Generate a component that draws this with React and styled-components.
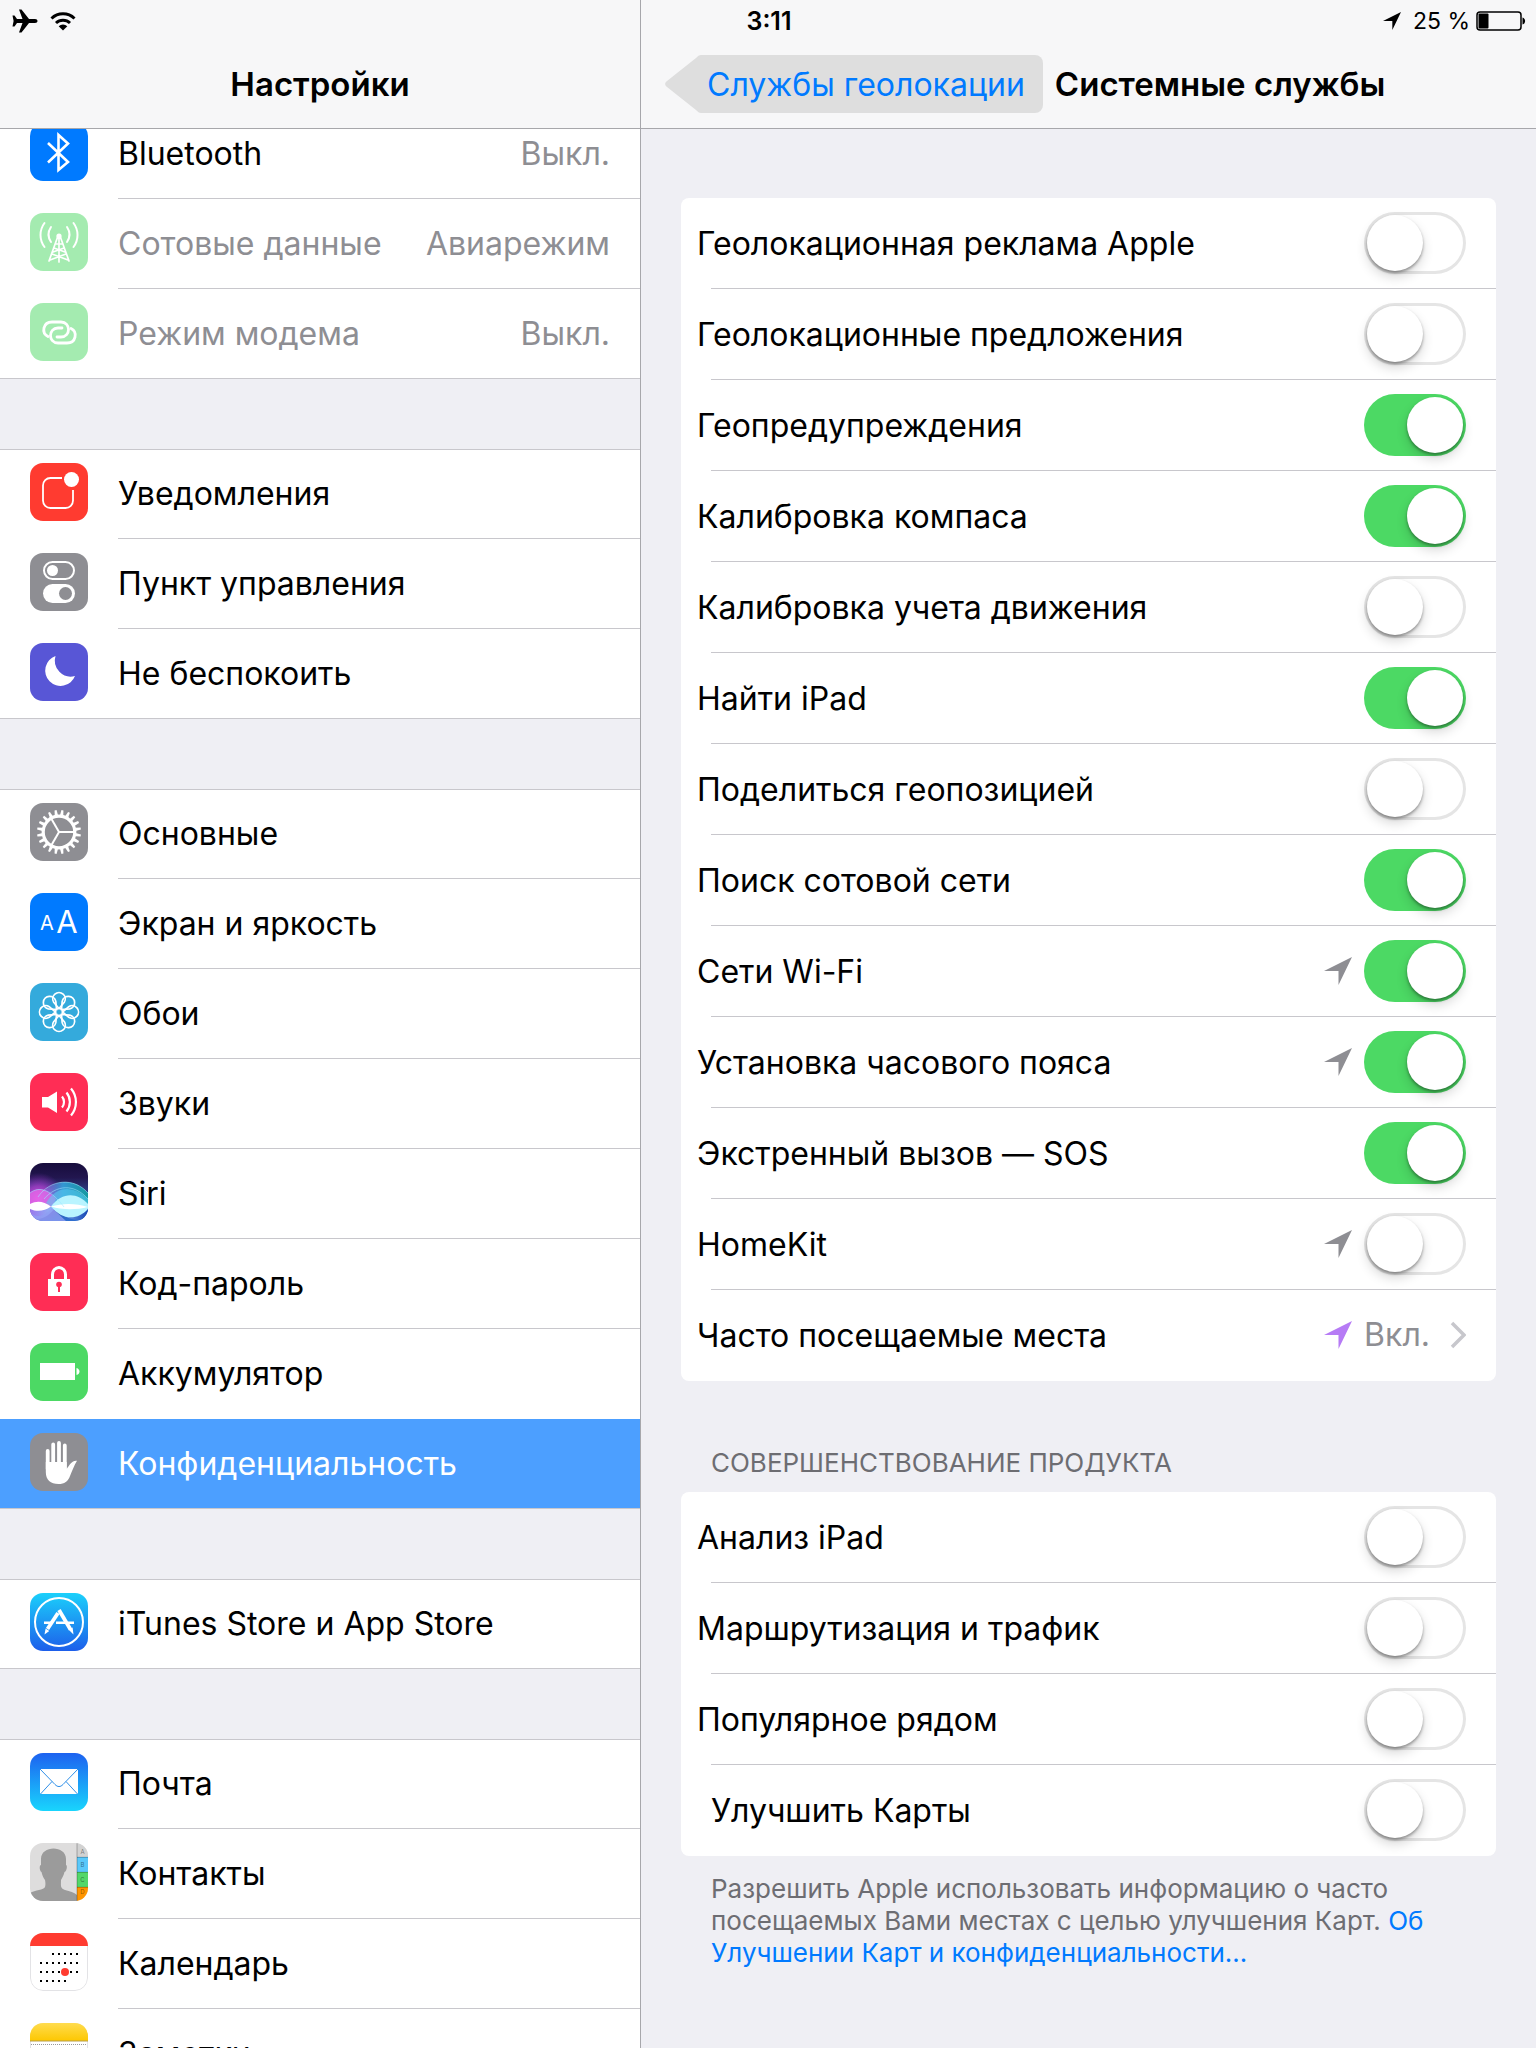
import React, { useState } from "react";
import styled, { createGlobalStyle } from "styled-components";

const color = {
  page: "#efeff4",
  bar: "#f7f7f8",
  barLine: "#a7a7ab",
  line: "#c8c7cc",
  text: "#000",
  muted: "#8e8e93",
  note: "#6d6d72",
  blue: "#007aff",
  green: "#4cd964",
};

const GlobalStyle = createGlobalStyle`
  *, *::before, *::after { box-sizing: border-box; }
  body {
    margin: 0;
    background: ${color.page};
    color: ${color.text};
    font-family: Inter, "Liberation Sans", sans-serif;
    font-size: 32px;
    line-height: 40px;
  }
`;

/* ---------- Layout ---------- */

const Screen = styled.div`
  position: relative;
  display: grid;
  grid-template-columns: 5fr 7fr;
  height: 100vh;
  overflow: hidden;
`;

const StatusBar = styled.div`
  position: absolute;
  z-index: 3;
  inset: 0 0 auto 0;
  height: 41px;
  padding: 0 10px 0 12px;
  display: grid;
  grid-template-columns: 1fr auto 1fr;
  align-items: center;
  font-size: 23px;
  line-height: 32px;
`;

const StatusGroup = styled.div`
  display: flex;
  align-items: center;
  justify-content: ${(p) => (p.$end ? "flex-end" : "flex-start")};
  gap: 12px;
`;

const Charge = styled.span`
  display: flex;
  align-items: center;
  gap: 6px;
`;

const Clock = styled.time`
  font-size: 25px;
  font-weight: 600;
`;

const Pane = styled.div`
  display: flex;
  flex-direction: column;
  min-width: 0;
  min-height: 0;
  border-left: ${(p) => (p.$divided ? `1px solid ${color.barLine}` : "none")};
`;

const NavBar = styled.header`
  position: relative;
  z-index: 2;
  flex: none;
  display: flex;
  align-items: center;
  justify-content: ${(p) => (p.$centered ? "center" : "flex-start")};
  gap: 12px;
  height: 129px;
  padding: 40px 24px 0;
  background: ${color.bar};
  border-bottom: 1px solid ${color.barLine};
`;

const Title = styled.h1`
  margin: 0;
  font-size: 33px;
  line-height: 42px;
  font-weight: 600;
  white-space: nowrap;
`;

const BackButton = styled.button`
  display: flex;
  padding: 0;
  border: 0;
  background: none;
  color: ${color.blue};
  font: inherit;
  white-space: nowrap;
  cursor: pointer;
`;

const BackTip = styled.svg`
  display: block;
  width: 36px;
  height: 58px;
  fill: #dedede;
`;

const BackLabel = styled.span`
  height: 58px;
  padding: 0 18px 0 6px;
  border-radius: 0 8px 8px 0;
  background: #dedede;
  line-height: 60px;
`;

const Scroll = styled.div`
  flex: 1;
  min-height: 0;
  overflow-y: auto;
  scrollbar-width: none;
`;

/* ---------- Sidebar ---------- */

const MenuNav = styled.nav`
  display: flex;
  flex-direction: column;
  gap: 70px;
  margin-top: -20px;
`;

const MenuGroup = styled.ul`
  margin: 0;
  padding: 0;
  list-style: none;
  background: #fff;
  box-shadow: inset 0 1px ${color.line};
`;

const MenuLink = styled.a`
  display: flex;
  align-items: stretch;
  gap: 30px;
  height: 90px;
  padding-left: 30px;
  border-bottom: 1px solid ${(p) => (p.$last ? color.line : "transparent")};
  background: ${(p) => (p.$selected ? "#4c9fff" : "transparent")};
  color: ${(p) => (p.$selected ? "#fff" : p.$dimmed ? color.muted : color.text)};
  text-decoration: none;
`;

const MenuIcon = styled.svg`
  flex: none;
  width: 58px;
  height: 58px;
  margin-top: 14px;
  border-radius: 13px;
  opacity: ${(p) => (p.$dimmed ? 0.5 : 1)};
`;

const MenuBody = styled.span`
  flex: 1;
  min-width: 0;
  display: flex;
  align-items: center;
  justify-content: space-between;
  margin-bottom: -1px;
  padding-right: 30px;
  border-bottom: 1px solid ${(p) => (p.$last ? "transparent" : color.line)};
  white-space: nowrap;
`;

const Value = styled.span`
  color: ${color.muted};
`;

/* ---------- Detail ---------- */

const Main = styled.main`
  padding: 69px 40px 40px;
`;

const Card = styled.ul`
  margin: 0;
  padding: 0;
  list-style: none;
  border-radius: 8px;
  background: #fff;
`;

const CardItem = styled.li`
  &::after {
    content: "";
    display: block;
    height: 1px;
    margin-left: 30px;
    background: ${color.line};
  }
  &:last-child::after {
    background: transparent;
  }
`;

const CardRow = styled.div`
  display: flex;
  align-items: center;
  gap: 12px;
  height: 90px;
  padding: 0 30px 0 ${(p) => (p.$inset ? 30 : 16)}px;
  color: inherit;
  text-decoration: none;
`;

const CardLabel = styled.label`
  flex: 1;
  min-width: 0;
  line-height: 42px;
  padding-top: 2px;
`;

const LinkValue = styled.span`
  display: flex;
  align-items: center;
  gap: 20px;
  color: ${color.muted};
`;

const Toggle = styled.input`
  appearance: none;
  flex: none;
  display: flex;
  width: 102px;
  height: 62px;
  margin: 0;
  padding: 3px;
  border-radius: 31px;
  background: #fff;
  box-shadow: inset 0 0 0 3px #e5e5e5;
  cursor: pointer;

  &::before {
    content: "";
    width: 56px;
    height: 56px;
    border-radius: 50%;
    background: #fff;
    box-shadow: 0 2px 3px rgba(0, 0, 0, 0.35), 0 6px 12px rgba(0, 0, 0, 0.16);
  }

  &:checked {
    justify-content: flex-end;
    background: ${color.green};
    box-shadow: none;
  }
`;

const SectionTitle = styled.h2`
  margin: 66px 30px 13px;
  color: ${color.note};
  font-size: 26px;
  line-height: 32px;
  font-weight: 400;
  text-transform: uppercase;
`;

const Note = styled.p`
  margin: 17px 30px 0;
  color: ${color.note};
  font-size: 26px;
  line-height: 32px;
`;

const NoteLink = styled.a`
  color: ${color.blue};
  text-decoration: none;
`;

/* ---------- Small drawings ---------- */

const LocationArrow = ({ fill = color.muted, size = 28 }) => (
  <svg width={size} height={size} viewBox="0 0 28 28" aria-hidden="true">
    <path d="M28 0 14.500 28V14H0Z" fill={fill} />
  </svg>
);

const Chevron = () => (
  <svg width="16" height="28" viewBox="0 0 16 28" fill="none" stroke="#c7c7cc" strokeWidth="3.500" aria-hidden="true">
    <path d="M2 2 14 14 2 26" />
  </svg>
);

const Airplane = () => (
  <svg width="26" height="24" viewBox="0 0 26 24" aria-hidden="true">
    <path d="M25.500 12c0 1.300-1 2-2.500 2h-6L9.500 23.500H7L10.500 14H5l-2.500 3.500H.5L1.600 12 .5 6.500h2L5 10h5.500L7 .5h2.500L17 10h6c1.500 0 2.500.7 2.500 2Z" />
  </svg>
);

const Wifi = () => (
  <svg width="26" height="20" viewBox="0 0 26 20" fill="none" stroke="#000" strokeWidth="3" aria-hidden="true">
    <path d="M1.500 7.500a16.500 16.500 0 0 1 23 0M6 12a10.200 10.200 0 0 1 14 0" />
    <path d="M13 19.500 8.700 15.200a6.200 6.200 0 0 1 8.600 0Z" fill="#000" stroke="none" />
  </svg>
);

const Battery = () => (
  <svg width="50" height="20" viewBox="0 0 50 20" aria-hidden="true">
    <rect x="1" y="1" width="44" height="18" rx="3" fill="none" stroke="#000" strokeWidth="1.500" />
    <rect x="2.500" y="2.500" width="10" height="15" rx="1" />
    <path d="M46.500 6.500c3.500 1 3.500 6 0 7Z" />
  </svg>
);

const around = (n) => Array.from({ length: n }, (_, i) => (i * 360) / n);

const glyphs = {
  bluetooth: (
    <>
      <rect width="58" height="58" fill="#007aff" />
      <path d="M18 20 38 39 28.500 47V12L38 20.500 18 39.500" fill="none" stroke="#fff" strokeWidth="2.600" />
    </>
  ),
  cellular: (
    <>
      <rect width="58" height="58" fill={color.green} />
      <g fill="none" stroke="#fff" strokeWidth="2" strokeLinecap="round">
        <path d="M14.500 10a20 20 0 0 0 0 24M43.500 10a20 20 0 0 1 0 24M21 14a13.500 13.500 0 0 0 0 15M37 14a13.500 13.500 0 0 1 0 15" />
        <path d="M28 23 19 48M30 23l9 25M29 22v27M24 35l11 4M34 35l-11 4M20 47l16-6M38 47l-16-6M25.500 31h7" strokeWidth="1.700" />
      </g>
      <circle cx="29" cy="23" r="2.600" fill="#fff" />
    </>
  ),
  hotspot: (
    <>
      <rect width="58" height="58" fill={color.green} />
      <g fill="none" stroke="#fff" strokeWidth="2.800" strokeLinecap="round">
        <path d="M18 33.500C11 30 13 19 22 19h9c10 0 10 15 0 15h-4" />
        <path d="M41 25.500C48 29 46 40 37 40h-9c-10 0-10-15 0-15h4" />
      </g>
    </>
  ),
  notifications: (
    <>
      <rect width="58" height="58" fill="#ff3b30" />
      <path d="M32 15H20.500a7.500 7.500 0 0 0-7.500 7.500v15a7.500 7.500 0 0 0 7.500 7.500h15a7.500 7.500 0 0 0 7.500-7.500V27" fill="none" stroke="#fff" strokeWidth="1.800" />
      <circle cx="41.500" cy="16.500" r="7.500" fill="#fff" />
    </>
  ),
  control: (
    <>
      <rect width="58" height="58" fill="#8e8e93" />
      <rect x="14" y="9" width="30" height="17" rx="8.500" fill="none" stroke="#fff" strokeWidth="2" />
      <circle cx="22.500" cy="17.500" r="5.500" fill="#fff" />
      <rect x="13" y="31" width="32" height="19" rx="9.500" fill="#fff" />
      <circle cx="35.500" cy="40.500" r="6.500" fill="#8e8e93" />
    </>
  ),
  moon: (
    <>
      <rect width="58" height="58" fill="#5856d6" />
      <path d="M25.500 13A15.400 15.400 0 1 0 45 33 16 16 0 0 1 25.500 13Z" fill="#fff" />
    </>
  ),
  gear: (
    <>
      <rect width="58" height="58" fill="#8e8e93" />
      <g fill="none" stroke="#fff">
        <circle cx="29" cy="29" r="15.800" strokeWidth="3.200" />
        {around(20).map((a) => (
          <path key={a} d="M-1.700-16.500-1-22H1L1.700-16.500Z" fill="#fff" stroke="none" transform={`translate(29 29) rotate(${a + 9})`} />
        ))}
        {around(3).map((a) => (
          <path key={a} d="M0 0H15" strokeWidth="2" transform={`translate(29 29) rotate(${a})`} />
        ))}
      </g>
    </>
  ),
  display: (
    <>
      <rect width="58" height="58" fill="#007aff" />
      <g fill="#fff" fontFamily="Inter, sans-serif" textAnchor="middle">
        <text x="17" y="37" fontSize="20">A</text>
        <text x="37" y="40" fontSize="31">A</text>
      </g>
    </>
  ),
  wallpaper: (
    <>
      <rect width="58" height="58" fill="#34aadc" />
      <g fill="none" stroke="#fff" strokeWidth="1.700">
        {around(8).map((a) => (
          <path key={a} d="M0-3.500-5.300-9.800A6.300 6.300 0 1 1 5.300-9.800Z" transform={`translate(29 29) rotate(${a})`} />
        ))}
        <circle cx="29" cy="29" r="3.600" />
      </g>
    </>
  ),
  sounds: (
    <>
      <rect width="58" height="58" fill="#ff2d55" />
      <path d="M12 24h6l9-5.500v21.500L18 34.500h-6Z" fill="#fff" />
      <path d="M32 23.500a8.500 8.500 0 0 1 0 11M36.500 19.500a15 15 0 0 1 0 19M41 15.500a21 21 0 0 1 0 27" fill="none" stroke="#fff" strokeWidth="2.200" />
    </>
  ),
  siri: (
    <>
      <defs>
        <linearGradient id="siri-sky" x1="0" y1="0" x2="0" y2="1">
          <stop offset="0" stopColor="#170d3c" />
          <stop offset="0.250" stopColor="#22164f" />
          <stop offset="0.500" stopColor="#2d3f86" />
          <stop offset="1" stopColor="#2f6fd0" />
        </linearGradient>
        <radialGradient id="siri-pink" cx="0.150" cy="0.620" r="0.450">
          <stop offset="0" stopColor="#f04be6" />
          <stop offset="0.500" stopColor="#b93fd6" stopOpacity="0.700" />
          <stop offset="1" stopColor="#8a35c8" stopOpacity="0" />
        </radialGradient>
        <linearGradient id="siri-teal" x1="0" y1="0" x2="1" y2="0">
          <stop offset="0" stopColor="#a06be8" stopOpacity="0.300" />
          <stop offset="0.500" stopColor="#35a9e4" />
          <stop offset="1" stopColor="#10a8a4" />
        </linearGradient>
        <linearGradient id="siri-low" x1="0" y1="0" x2="1" y2="0">
          <stop offset="0" stopColor="#9a78ec" />
          <stop offset="0.450" stopColor="#8dbcf8" />
          <stop offset="1" stopColor="#1546b4" />
        </linearGradient>
      </defs>
      <rect width="58" height="58" fill="url(#siri-sky)" />
      <rect width="58" height="58" fill="url(#siri-pink)" />
      <path d="M8 34C20 18 42 12 58 30V46H8Z" fill="url(#siri-teal)" opacity="0.850" />
      <path d="M0 30C8 23 18 26 26 36L22 44H0Z" fill="#e469e8" opacity="0.750" />
      <path d="M0 44H58V54C48 60 36 56 24 46 16 56 8 58 0 54Z" fill="url(#siri-low)" />
      <path d="M0 50C8 56 16 52 22 45L36 58H0Z" fill="#8f9df2" opacity="0.800" />
      <path d="M16 40C26 22 44 22 58 36V44H22Z" fill="#5ad0f4" opacity="0.550" />
      <path d="M0 41C8 37 14 39 21 43.500 14 48.500 7 49 0 46Z" fill="#fff" />
      <path d="M21 43.500C32 29 47 29 58 41V46C47 58 32 57 21 43.500Z" fill="#b9f4ff" />
      <path d="M21 43.500C32 40 46 40 58 44 46 47 32 47 21 43.500Z" fill="#fff" />
      <path d="M0 30C10 22 22 28 34 44M8 34C20 16 44 14 58 30M14 36C26 22 44 20 58 36" stroke="#9fe8ff" strokeWidth="0.800" fill="none" opacity="0.700" />
    </>
  ),
  lock: (
    <>
      <rect width="58" height="58" fill="#ff2d55" />
      <rect x="18" y="26" width="22" height="17" fill="#fff" />
      <path d="M22.500 27v-5.500a6.500 7 0 0 1 13 0V27" fill="none" stroke="#fff" strokeWidth="3" />
      <circle cx="29" cy="31.500" r="2.800" fill="#ff2d55" />
      <rect x="28" y="32" width="2" height="7" fill="#ff2d55" />
    </>
  ),
  battery: (
    <>
      <rect width="58" height="58" fill={color.green} />
      <rect x="10" y="20" width="35" height="17" fill="#fff" />
      <path d="M46.500 25c4 1 4 6 0 7Z" fill="#fff" />
    </>
  ),
  hand: (
    <>
      <rect width="58" height="58" fill="#8e8e93" />
      <path d="M17.700 18V36M23.200 11.500V36M29 10V36M34.800 12.500V36" stroke="#fff" strokeWidth="3.800" strokeLinecap="round" />
      <path d="M15.800 29H36.700V36C39.500 32 42 27 47 27.800 44 33 42 38 40 43 38 48.500 34.500 51 28.500 51 20.500 51 15.800 47 15.800 39Z" fill="#fff" />
    </>
  ),
  store: (
    <>
      <defs>
        <linearGradient id="store-bg" x1="0" y1="0" x2="0" y2="1">
          <stop offset="0" stopColor="#1bd0fb" />
          <stop offset="1" stopColor="#1d5eea" />
        </linearGradient>
      </defs>
      <rect width="58" height="58" fill="url(#store-bg)" />
      <circle cx="29" cy="29" r="24" fill="none" stroke="#fff" strokeWidth="2" />
      <g stroke="#fff" strokeWidth="2.400" fill="none">
        <path d="M14 29.800h9M26 29.800h9M38 29.800h6" />
        <path d="M28 20 17.500 36" strokeWidth="3.800" />
        <path d="M29 17 40.500 36.500" strokeWidth="3.800" />
      </g>
      <path d="M15.600 35.500 19.300 38 14.500 41.500ZM38.500 36.500 42.600 34.500 43.500 41.500Z" fill="#fff" />
    </>
  ),
  mail: (
    <>
      <defs>
        <linearGradient id="mail-bg" x1="0" y1="0" x2="0" y2="1">
          <stop offset="0" stopColor="#1d62f0" />
          <stop offset="1" stopColor="#19d5fd" />
        </linearGradient>
      </defs>
      <rect width="58" height="58" fill="url(#mail-bg)" />
      <rect x="10" y="16" width="38" height="25" rx="1" fill="#fff" />
      <path d="M10 16 25 31.500c2.500 2.700 5.500 2.700 8 0L48 16M10.500 41 22 28.500M47.500 41 36 28.500" fill="none" stroke="#2f8fe8" strokeWidth="1" />
    </>
  ),
  contacts: (
    <>
      <rect width="58" height="58" fill="#dedddd" />
      <path d="M11 16C11 2 36 2 36 16v6c1.500 0 1 6-1.500 7-1 4-2.500 6-3.500 8 0 6-1 8 4 10 5 1.500 9 2 12 5v6H0V50c5-3 14-3 15-6 .6-2 .6-4 0-7-1.500-2-2.500-4-3.500-8-2-1-2.500-7-.5-7Z" fill="#9b9b9b" />
      <rect x="47" width="11" height="14" fill="#d2d2d2" />
      <rect x="47" y="14" width="11" height="15" fill="#5ac8fa" />
      <rect x="47" y="29" width="11" height="15" fill="#53d769" />
      <rect x="47" y="44" width="11" height="14" fill="#ff9500" />
      <path d="M47 0V58M47 14.300H58M47 29.300H58M47 44.300H58" stroke="#00000055" strokeWidth="0.800" />
      <g fill="#00000077" fontSize="6" textAnchor="middle" fontFamily="Inter, sans-serif">
        <text x="52.500" y="11">A</text>
        <text x="52.500" y="24">B</text>
        <text x="52.500" y="39">C</text>
        <text x="52.500" y="51">D</text>
      </g>
    </>
  ),
  calendar: (
    <>
      <rect x="0.500" y="0.500" width="57" height="57" rx="12.500" fill="#fff" stroke="#e3e3e6" />
      <rect width="58" height="13" fill="#ff3b30" />
      {[[2, 6], [0, 6], [0, 6], [0, 4]].map(([from, to], row) =>
        Array.from({ length: to - from + 1 }, (_, i) => (
          <rect key={`${row}-${i}`} x={10 + (from + i) * 6} y={20 + row * 9} width="2" height="2" />
        ))
      )}
      <circle cx="35" cy="39" r="4" fill="#ff3b30" />
    </>
  ),
  notes: (
    <>
      <defs>
        <linearGradient id="notes-top" x1="0" y1="0" x2="0" y2="1">
          <stop offset="0" stopColor="#ffdc4f" />
          <stop offset="1" stopColor="#fdc700" />
        </linearGradient>
      </defs>
      <rect x="0.500" y="0.500" width="57" height="57" rx="12.500" fill="#fff" stroke="#e3e3e6" />
      <rect width="58" height="18" fill="url(#notes-top)" />
      <path d="M0 18H58" stroke="#b8a04a" strokeWidth="1" />
      <path d="M1 21.500H57" stroke="#999" strokeWidth="1" strokeDasharray="1 1" />
      <path d="M0 36H58" stroke="#ccc" />
    </>
  ),
};

/* ---------- Data ---------- */

const menu = [
  [
    { id: "bluetooth", label: "Bluetooth", value: "Выкл." },
    { id: "cellular", label: "Сотовые данные", value: "Авиарежим", dimmed: true },
    { id: "hotspot", label: "Режим модема", value: "Выкл.", dimmed: true },
  ],
  [
    { id: "notifications", label: "Уведомления" },
    { id: "control", label: "Пункт управления" },
    { id: "moon", label: "Не беспокоить" },
  ],
  [
    { id: "gear", label: "Основные" },
    { id: "display", label: "Экран и яркость" },
    { id: "wallpaper", label: "Обои" },
    { id: "sounds", label: "Звуки" },
    { id: "siri", label: "Siri" },
    { id: "lock", label: "Код-пароль" },
    { id: "battery", label: "Аккумулятор", flush: true },
    { id: "hand", label: "Конфиденциальность", selected: true },
  ],
  [{ id: "store", label: "iTunes Store и App Store" }],
  [
    { id: "mail", label: "Почта" },
    { id: "contacts", label: "Контакты" },
    { id: "calendar", label: "Календарь" },
    { id: "notes", label: "Заметки" },
  ],
];

const services = [
  { id: "ads", label: "Геолокационная реклама Apple" },
  { id: "suggestions", label: "Геолокационные предложения" },
  { id: "alerts", label: "Геопредупреждения", on: true },
  { id: "compass", label: "Калибровка компаса", on: true },
  { id: "motion", label: "Калибровка учета движения" },
  { id: "find", label: "Найти iPad", on: true },
  { id: "share", label: "Поделиться геопозицией" },
  { id: "cell", label: "Поиск сотовой сети", on: true },
  { id: "wifi", label: "Сети Wi-Fi", on: true, used: true },
  { id: "timezone", label: "Установка часового пояса", on: true, used: true },
  { id: "sos", label: "Экстренный вызов — SOS", on: true },
  { id: "homekit", label: "HomeKit", used: true },
];

const product = [
  { id: "analytics", label: "Анализ iPad" },
  { id: "routing", label: "Маршрутизация и трафик" },
  { id: "popular", label: "Популярное рядом" },
  { id: "maps", label: "Улучшить Карты", inset: true },
];

function ToggleItem({ item }) {
  const [on, setOn] = useState(Boolean(item.on));
  return (
    <CardItem>
      <CardRow $inset={item.inset}>
        <CardLabel htmlFor={item.id}>{item.label}</CardLabel>
        {item.used && <LocationArrow />}
        <Toggle id={item.id} type="checkbox" role="switch" checked={on} onChange={() => setOn(!on)} />
      </CardRow>
    </CardItem>
  );
}

function MenuItem({ item, last }) {
  return (
    <li>
      <MenuLink href={`#${item.id}`} $last={last} $selected={item.selected} $dimmed={item.dimmed}>
        <MenuIcon viewBox="0 0 58 58" $dimmed={item.dimmed} aria-hidden="true">
          {glyphs[item.id]}
        </MenuIcon>
        <MenuBody $last={last || item.flush}>
          <span>{item.label}</span>
          {item.value && <Value>{item.value}</Value>}
        </MenuBody>
      </MenuLink>
    </li>
  );
}

export default function App() {
  return (
    <>
      <GlobalStyle />
      <Screen>
        <StatusBar>
          <StatusGroup>
            <Airplane />
            <Wifi />
          </StatusGroup>
          <Clock>3:11</Clock>
          <StatusGroup $end>
            <LocationArrow fill="#000" size={18} />
            <Charge>
              25 %
              <Battery />
            </Charge>
          </StatusGroup>
        </StatusBar>

        <Pane>
          <NavBar $centered>
            <Title>Настройки</Title>
          </NavBar>
          <Scroll>
            <MenuNav>
              {menu.map((group) => (
                <MenuGroup key={group[0].id}>
                  {group.map((item, i) => (
                    <MenuItem key={item.id} item={item} last={i === group.length - 1} />
                  ))}
                </MenuGroup>
              ))}
            </MenuNav>
          </Scroll>
        </Pane>

        <Pane $divided>
          <NavBar>
            <BackButton type="button">
              <BackTip viewBox="0 0 36 58" aria-hidden="true">
                <path d="M36 0V58C34 58 33 57 31 55L2 32C-.5 30-.5 28 2 26L31 3C33 1 34 0 36 0Z" />
              </BackTip>
              <BackLabel>Службы геолокации</BackLabel>
            </BackButton>
            <Title as="h2">Системные службы</Title>
          </NavBar>
          <Scroll>
            <Main>
              <Card>
                {services.map((item) => (
                  <ToggleItem key={item.id} item={item} />
                ))}
                <CardItem>
                  <CardRow as="a" href="#frequent">
                    <CardLabel as="span">Часто посещаемые места</CardLabel>
                    <LocationArrow fill="#b67bf5" />
                    <LinkValue>
                      Вкл.
                      <Chevron />
                    </LinkValue>
                  </CardRow>
                </CardItem>
              </Card>

              <SectionTitle>Совершенствование продукта</SectionTitle>
              <Card>
                {product.map((item) => (
                  <ToggleItem key={item.id} item={item} />
                ))}
              </Card>
              <Note>
                Разрешить Apple использовать информацию о часто посещаемых Вами местах с целью улучшения Карт.{" "}
                <NoteLink href="#about">Об Улучшении Карт и конфиденциальности…</NoteLink>
              </Note>
            </Main>
          </Scroll>
        </Pane>
      </Screen>
    </>
  );
}
